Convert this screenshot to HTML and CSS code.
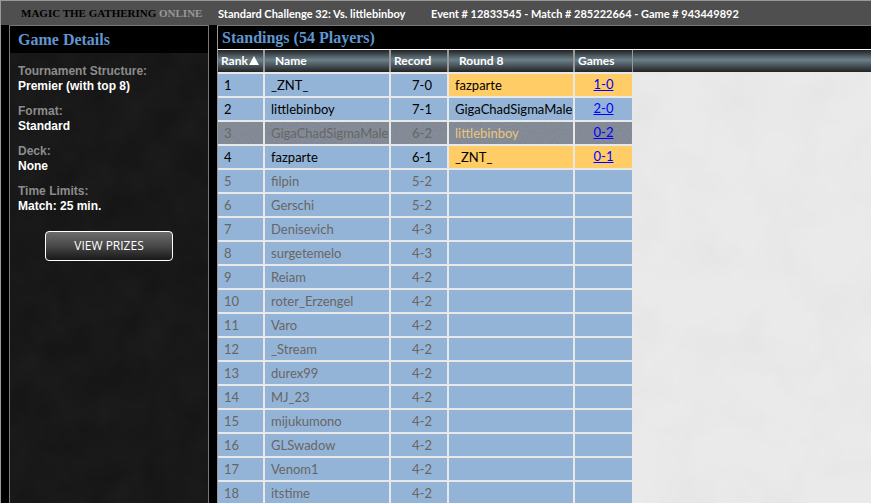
FILE: index.html
```
<!DOCTYPE html>
<html lang="en">
<head>
    <meta charset="UTF-8">
    <meta name="viewport" content="width=device-width, initial-scale=1.0">
    <title>Magic The Gathering Online</title>
    <link rel="stylesheet" href="styles.css">
</head>
<body>
    <header class="topbar">
        <div class="logo"><b>MAGIC</b> THE GATHERING <span>ONLINE</span></div>
        <div class="match-name">Standard Challenge 32: Vs. littlebinboy</div>
        <div class="match-ids">Event # 12833545 - Match # 285222664 - Game # 943449892</div>
    </header>

    <div class="layout">
        <aside class="details">
            <h2 class="panel-title">Game Details</h2>
            <dl class="details-list">
                <dt>Tournament Structure:</dt>
                <dd>Premier (with top 8)</dd>
                <dt>Format:</dt>
                <dd>Standard</dd>
                <dt>Deck:</dt>
                <dd>None</dd>
                <dt>Time Limits:</dt>
                <dd>Match: 25 min.</dd>
            </dl>
            <button type="button" class="prizes-button">VIEW PRIZES</button>
        </aside>

        <main class="standings">
            <h2 class="panel-title">Standings (54 Players)</h2>
            <table class="standings-table">
                <colgroup>
                    <col class="col-rank">
                    <col class="col-name">
                    <col class="col-record">
                    <col class="col-round">
                    <col class="col-games">
                    <col>
                </colgroup>
                <thead>
                    <tr>
                        <th class="tight">Rank<svg class="sort-icon" width="10" height="10" viewBox="0 0 10 10"><path d="M5 0L10 9H0z" fill="#fff"/></svg></th>
                        <th>Name</th>
                        <th class="tight">Record</th>
                        <th>Round 8</th>
                        <th class="tight">Games</th>
                        <th class="filler"></th>
                    </tr>
                </thead>
                <tbody>
                    <tr class="active"><td>1</td><td>_ZNT_</td><td class="record">7-0</td><td class="win">fazparte</td><td class="games win"><a href="#">1-0</a></td><td class="filler"></td></tr>
                    <tr class="active"><td>2</td><td>littlebinboy</td><td class="record">7-1</td><td>GigaChadSigmaMale</td><td class="games"><a href="#">2-0</a></td><td class="filler"></td></tr>
                    <tr class="self"><td>3</td><td>GigaChadSigmaMale</td><td class="record">6-2</td><td class="opponent">littlebinboy</td><td class="games"><a href="#">0-2</a></td><td class="filler"></td></tr>
                    <tr class="active"><td>4</td><td>fazparte</td><td class="record">6-1</td><td class="win">_ZNT_</td><td class="games win"><a href="#">0-1</a></td><td class="filler"></td></tr>
                    <tr><td>5</td><td>filpin</td><td class="record">5-2</td><td></td><td></td><td class="filler"></td></tr>
                    <tr><td>6</td><td>Gerschi</td><td class="record">5-2</td><td></td><td></td><td class="filler"></td></tr>
                    <tr><td>7</td><td>Denisevich</td><td class="record">4-3</td><td></td><td></td><td class="filler"></td></tr>
                    <tr><td>8</td><td>surgetemelo</td><td class="record">4-3</td><td></td><td></td><td class="filler"></td></tr>
                    <tr><td>9</td><td>Reiam</td><td class="record">4-2</td><td></td><td></td><td class="filler"></td></tr>
                    <tr><td>10</td><td>roter_Erzengel</td><td class="record">4-2</td><td></td><td></td><td class="filler"></td></tr>
                    <tr><td>11</td><td>Varo</td><td class="record">4-2</td><td></td><td></td><td class="filler"></td></tr>
                    <tr><td>12</td><td>_Stream</td><td class="record">4-2</td><td></td><td></td><td class="filler"></td></tr>
                    <tr><td>13</td><td>durex99</td><td class="record">4-2</td><td></td><td></td><td class="filler"></td></tr>
                    <tr><td>14</td><td>MJ_23</td><td class="record">4-2</td><td></td><td></td><td class="filler"></td></tr>
                    <tr><td>15</td><td>mijukumono</td><td class="record">4-2</td><td></td><td></td><td class="filler"></td></tr>
                    <tr><td>16</td><td>GLSwadow</td><td class="record">4-2</td><td></td><td></td><td class="filler"></td></tr>
                    <tr><td>17</td><td>Venom1</td><td class="record">4-2</td><td></td><td></td><td class="filler"></td></tr>
                    <tr><td>18</td><td>itstime</td><td class="record">4-2</td><td></td><td></td><td class="filler"></td></tr>
                </tbody>
            </table>
        </main>
    </div>
</body>
</html>
```

FILE: styles.css
```
* {
    box-sizing: border-box;
}
body {
    margin: 0;
    height: 100vh;
    overflow: hidden;
    display: flex;
    flex-direction: column;
    background: #000;
    border-top: 1px solid #999;
    border-left: 1px solid #999;
    font-family: Lato, "Liberation Sans", sans-serif;
    font-size: 13px;
}

/* top bar */
.topbar {
    display: flex;
    align-items: center;
    flex-shrink: 0;
    height: 24px;
    padding-left: 20px;
    background: #4f4f4f;
    color: #fff;
    font-size: 11px;
    font-weight: bold;
    white-space: nowrap;
}
.logo {
    width: 197px;
    color: #000;
    font-family: "Liberation Serif", serif;
}
.logo span {
    color: #999;
}
.match-name {
    width: 213px;
}

/* page columns */
.layout {
    display: flex;
    flex: 1;
    gap: 8px;
    min-height: 0;
    padding-left: 8px;
}
.panel-title {
    margin: 0;
    background: #000;
    color: #6096d0;
    font-family: "Liberation Serif", serif;
    font-size: 16px;
    font-weight: bold;
}

/* game details */
.details {
    width: 200px;
    flex-shrink: 0;
    border: 1px solid #777;
    border-bottom: none;
    background: #161616 url("data:image/svg+xml,%3Csvg xmlns='http://www.w3.org/2000/svg' width='300' height='500'%3E%3Cfilter id='n'%3E%3CfeTurbulence type='fractalNoise' baseFrequency='.03' numOctaves='5'/%3E%3CfeColorMatrix values='0 0 0 0 1 0 0 0 0 1 0 0 0 0 1 .04 0 0 0 -.01'/%3E%3C/filter%3E%3Crect width='300' height='500' filter='url(%23n)'/%3E%3C/svg%3E");
    font-family: "Liberation Sans", Arial, sans-serif;
    font-size: 12px;
    font-weight: bold;
}
.details .panel-title {
    padding-left: 8px;
    line-height: 27px;
}
.details-list {
    margin: 11px 8px 17px;
    line-height: 15px;
}
.details-list dt {
    color: #8c8c8c;
}
.details-list dd {
    margin: 0 0 10px;
    color: #fff;
}
.prizes-button {
    display: block;
    width: 128px;
    height: 30px;
    margin: 0 auto;
    padding: 0;
    border: 1px solid #fff;
    border-radius: 4px;
    background: linear-gradient(#6c6c6c, #484848 50%, #181818);
    color: #fff;
    font-family: "Open Sans", sans-serif;
    font-size: 12px;
    line-height: 26px;
    cursor: pointer;
}

/* standings */
.standings {
    flex: 1;
    min-width: 0;
    overflow: hidden;
    border-top: 1px solid #777;
    border-left: 1px solid #999;
    background: #eaeaea url("data:image/svg+xml,%3Csvg xmlns='http://www.w3.org/2000/svg' width='700' height='500'%3E%3Cfilter id='n'%3E%3CfeTurbulence type='fractalNoise' baseFrequency='.02' numOctaves='5'/%3E%3CfeColorMatrix values='0 0 0 0 .5 0 0 0 0 .5 0 0 0 0 .5 .2 0 0 0 -.08'/%3E%3C/filter%3E%3Crect width='700' height='500' filter='url(%23n)'/%3E%3C/svg%3E");
}
.standings .panel-title {
    padding-left: 4px;
    line-height: 23px;
}
.standings-table {
    width: 100%;
    table-layout: fixed;
    border-collapse: separate;
    border-spacing: 0;
    border-top: 1px solid #fff;
}
.col-rank {
    width: 47px;
}
.col-name, .col-round {
    width: 126px;
}
.col-record {
    width: 58px;
}
.col-games {
    width: 57px;
}
thead tr {
    background: linear-gradient(#222, #6b808a 45%, #222);
}
th {
    height: 22px;
    padding: 0 0 0 10px;
    border-right: 2px solid #999;
    color: #fff;
    font-size: 12px;
    line-height: 20px;
    text-align: left;
    white-space: nowrap;
}
th.tight {
    padding-left: 3px;
}
.sort-icon {
    margin-left: 1px;
    vertical-align: -1px;
}
td {
    height: 24px;
    padding: 0 0 0 6px;
    border-top: 2px solid #e8e8e8;
    border-right: 2px solid #e8e8e8;
    background: #94b4d7;
    color: #666;
    line-height: 20px;
    white-space: nowrap;
}
.active td {
    color: #000;
}
td.record {
    padding: 0 0 0 6px;
    text-align: center;
}
td.games {
    padding: 0;
    text-align: center;
    vertical-align: top;
}
td a {
    color: #00f;
}
td.win {
    background: #ffcc66;
}
.self td {
    background: #858d9b url("data:image/svg+xml,%3Csvg xmlns='http://www.w3.org/2000/svg' width='130' height='24'%3E%3Cfilter id='n'%3E%3CfeTurbulence type='fractalNoise' baseFrequency='.6' numOctaves='2'/%3E%3CfeColorMatrix values='0 0 0 0 .2 0 0 0 0 .2 0 0 0 0 .2 1 0 0 0 -.35'/%3E%3C/filter%3E%3Crect width='130' height='24' filter='url(%23n)'/%3E%3C/svg%3E");
}
.self td.opponent {
    color: #ebc67c;
}
th:nth-child(5), td:nth-child(5) {
    border-right: none;
}
th.filler {
    border-right: none;
    border-left: 1px solid #999;
}
.standings-table td.filler {
    border: none;
    background: none;
}
```
